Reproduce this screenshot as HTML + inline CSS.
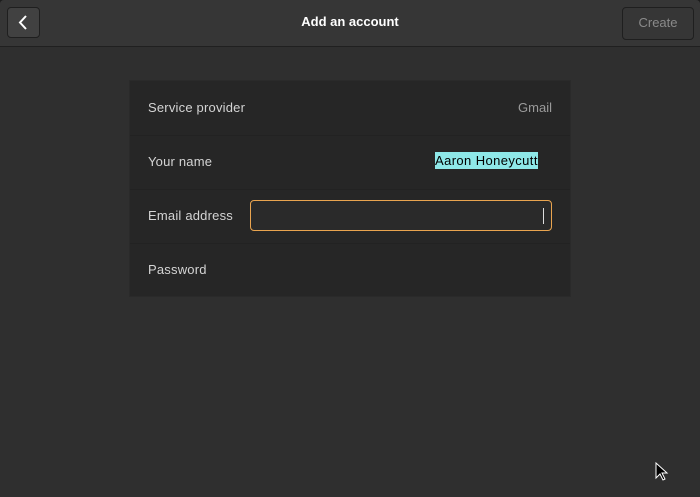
<!DOCTYPE html>
<html><head><style>
body{margin:0;width:700px;height:497px;background:#1c1c1c;font-family:"Liberation Sans",sans-serif;overflow:hidden;position:relative}
.win{position:absolute;left:0;top:0;width:700px;height:497px;background:#2f2f2f;border-radius:4px 4px 0 0;overflow:hidden}
.hdr{position:absolute;left:0;top:0;width:700px;height:46px;background:#363636;border-bottom:1px solid #202020}
.back{position:absolute;left:7px;top:7px;width:33px;height:31px;background:#414141;border:1px solid #1f1f1f;border-radius:4px;box-sizing:border-box}
.title{position:absolute;left:0;width:700px;top:14px;text-align:center;color:#fff;font-weight:bold;font-size:13px}
.create{position:absolute;left:622px;top:7px;width:72px;height:33px;border:1px solid #1f1f1f;border-radius:4px;box-sizing:border-box;color:#8a8a8a;font-size:13px;text-align:center;line-height:30px}
.card{position:absolute;left:129px;top:80px;width:442px;height:217px;background:#262626;border:1px solid #2a2a2a;box-sizing:border-box}
.row{position:absolute;left:0;width:440px;height:54px;border-bottom:1px solid #222}
.lbl{position:absolute;left:18px;top:19px;color:#d4d4d4;font-size:13px;letter-spacing:0.2px}
</style></head><body><div class="win">
<div class="hdr">
<div class="back"><svg width="33" height="31" style="position:absolute;left:-1px;top:-1px"><path d="M19 9l-6 6.5 6 6.5" stroke="#fff" stroke-width="2" fill="none"/></svg></div>
<div class="title">Add an account</div>
<div class="create">Create</div>
</div>
<div class="card">
<div class="row" style="top:0"><span class="lbl">Service provider</span><span style="position:absolute;right:18px;top:19px;color:#9a9a9a;font-size:13px">Gmail</span></div>
<div class="row" style="top:54px"><span class="lbl">Your name</span><span style="position:absolute;left:305px;top:17px;width:103px;height:17px;line-height:17px;background:#8ee8e8;color:#000;font-size:13px;letter-spacing:0.4px;white-space:nowrap">Aaron Honeycutt</span></div>
<div class="row" style="top:108px"><span class="lbl">Email address</span><div style="position:absolute;left:120px;top:11px;width:302px;height:31px;border:1px solid #e9a44f;border-radius:4px;box-sizing:border-box;background:#2a2a2a"><div style="position:absolute;left:292px;top:7px;width:1px;height:16px;background:#ddd"></div></div></div>
<div class="row" style="top:162px;border:none"><span class="lbl">Password</span></div>
</div>
<svg style="position:absolute;left:655px;top:462px" width="14" height="20"><path d="M1 1v15l4-4 3 6 2-1-3-6h5z" fill="#000" stroke="#fff" stroke-width="1"/></svg>
</div></body></html>
